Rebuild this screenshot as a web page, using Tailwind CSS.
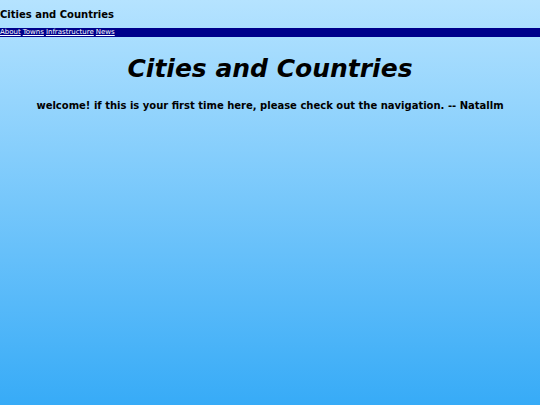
<!DOCTYPE html>
<html lang="en">
<head>
    <meta charset="UTF-8">
    <meta name="viewport" content="width=device-width, initial-scale=1.0">
    <title>Cities and Countries</title>
    <script src="https://cdn.jsdelivr.net/npm/@tailwindcss/browser@4"></script>
</head>
<body class="min-h-screen bg-linear-to-b/srgb from-[#b5e3ff] to-[#37abf7] font-['Verdana','DejaVu_Sans',sans-serif] text-black">
    <header>
        <h2 class="pt-2 pb-1.5 text-[10px] leading-[14px] font-bold">Cities and Countries</h2>
        <nav class="flex gap-[2px] bg-[#00008b] text-[7px] leading-[9px] text-white">
            <a href="#about" class="underline">About</a>
            <a href="#towns" class="underline">Towns</a>
            <a href="#infrastructure" class="underline">Infrastructure</a>
            <a href="#news" class="underline">News</a>
        </nav>
    </header>
    <main class="pt-4 text-center">
        <h1 class="text-[25px] leading-8 font-bold italic">Cities and Countries</h1>
        <p class="pt-3.5 text-[10px] leading-[14px] font-bold">welcome! if this is your first time here, please check out the navigation. -- Natallm</p>
    </main>
</body>
</html>
